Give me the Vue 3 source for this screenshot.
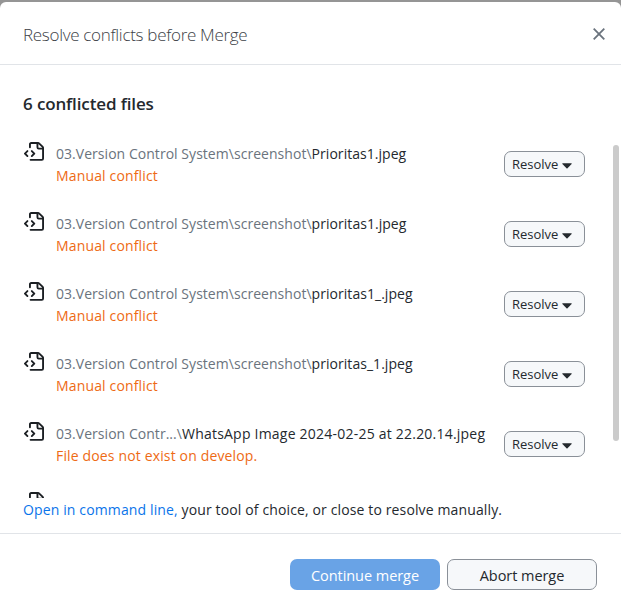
<script setup>
const dir = '03.Version Control System\\screenshot\\'
const files = [
  { dir, name: 'Prioritas1.jpeg', status: 'Manual conflict' },
  { dir, name: 'prioritas1.jpeg', status: 'Manual conflict' },
  { dir, name: 'prioritas1_.jpeg', status: 'Manual conflict' },
  { dir, name: 'prioritas_1.jpeg', status: 'Manual conflict' },
  { dir: '03.Version Contr...\\', name: 'WhatsApp Image 2024-02-25 at 22.20.14.jpeg', status: 'File does not exist on develop.', wide: true },
  { dir: '', name: '', status: '' },
]
</script>

<template>
  <div class="backdrop">
    <section class="dialog">
      <header>
        <h1>Resolve conflicts before Merge</h1>
        <button class="close" aria-label="Close">
          <svg width="12" height="12" viewBox="0 0 12 12"><path d="M.7.7l10.6 10.6M11.3.7L.7 11.3" /></svg>
        </button>
      </header>
      <main>
        <h2>6 conflicted files</h2>
        <div class="scroller">
          <ul>
            <li v-for="(f, i) in files" :key="i">
              <svg class="file" width="20" height="20" viewBox="0 0 16 16">
                <path d="M4 1.75C4 .784 4.784 0 5.75 0h5.586c.464 0 .909.184 1.237.513l2.914 2.914c.329.328.513.773.513 1.237v8.586A1.75 1.75 0 0 1 14.25 15h-9a.75.75 0 0 1 0-1.5h9a.25.25 0 0 0 .25-.25V6h-2.75A1.75 1.75 0 0 1 10 4.25V1.5H5.75a.25.25 0 0 0-.25.25v2.5a.75.75 0 0 1-1.5 0Zm1.72 4.97a.75.75 0 0 1 1.06 0l2 2a.75.75 0 0 1 0 1.06l-2 2a.749.749 0 0 1-1.275-.326.749.749 0 0 1 .215-.734l1.47-1.47-1.47-1.47a.75.75 0 0 1 0-1.06ZM3.28 7.78 1.81 9.25l1.47 1.47a.751.751 0 0 1-.018 1.042.751.751 0 0 1-1.042.018l-2-2a.75.75 0 0 1 0-1.06l2-2a.751.751 0 0 1 1.042.018.751.751 0 0 1 .018 1.042Zm8.22-6.218V4.25c0 .138.112.25.25.25h2.688l-.011-.013-2.914-2.914-.013-.011Z" />
              </svg>
              <template v-if="f.name">
                <div class="info">
                  <div class="path"><span class="dir">{{ f.dir }}</span><span :class="{ wide: f.wide }">{{ f.name }}</span></div>
                  <div class="status">{{ f.status }}</div>
                </div>
                <button class="resolve">
                  <span>Resolve</span>
                  <svg width="10" height="6" viewBox="0 0 10 6"><path d="M.6.3h8.8q.6.2.2.7L5.5 5.3q-.5.4-1 0L.4 1Q0 .5.6.3z" /></svg>
                </button>
              </template>
            </li>
          </ul>
          <div class="track"><div class="thumb"></div></div>
        </div>
        <p><a>Open in command line,</a> your tool of choice, or close to resolve manually.</p>
      </main>
      <footer>
        <button class="primary"><span>Continue merge</span></button>
        <button class="secondary"><span>Abort merge</span></button>
      </footer>
    </section>
  </div>
</template>

<style>
body { margin: 0; overflow: hidden; }
</style>

<style scoped>
* { box-sizing: border-box; }
.backdrop {
  height: 609px;
  padding-top: 2px;
  background: #959595;
  font-family: "Open Sans", "Noto Sans", sans-serif;
  font-size: 14px;
  font-weight: 370;
  color: #24292e;
}
.dialog {
  height: 607px;
  background: #fff;
  border-radius: 6px 6px 0 0;
  display: flex;
  flex-direction: column;
}
header {
  height: 63px;
  border-bottom: 1px solid #e1e4e8;
  display: flex;
  align-items: center;
  justify-content: space-between;
  padding: 2px 16px 0 23px;
}
h1 { margin: 0; padding-top: 1px; font-size: 17px; font-weight: 300; line-height: 24px; letter-spacing: -0.3px; color: #3c4146; white-space: nowrap; }
button { font-family: inherit; font-weight: inherit; margin: 0; padding: 0; }
.close { border: 0; background: none; width: 12px; height: 12px; display: flex; }
.close path { stroke: #6a737d; stroke-width: 1.8; fill: none; }
main { height: 469px; border-bottom: 1px solid #e1e4e8; padding: 28px 0 0 23px; }
h2 { margin: 0; font-size: 17px; font-weight: 600; line-height: 22px; letter-spacing: -0.13px; }
.scroller { margin-top: 20px; height: 363px; display: flex; overflow: hidden; }
ul { margin: 0; padding: 0; list-style: none; width: 562px; }
li { height: 70px; display: flex; align-items: flex-start; padding-top: 7px; }
.file { margin: 0 0 0 1px; flex: none; fill: #1b1f23; }
.info { flex: 1; padding: 1px 0 0 12px; white-space: nowrap; line-height: 22px; letter-spacing: 0.04px; }
.dir { color: #6a737d; }
.wide { letter-spacing: 0.22px; }
.status { color: #ee6a14; letter-spacing: 0.15px; }
.resolve {
  flex: none;
  width: 81px;
  height: 26px;
  margin-top: 9px;
  border: 1px solid #8a9098;
  border-radius: 7px;
  background: #f6f8fa;
  color: #24292e;
  display: flex;
  align-items: center;
  gap: 4px;
  padding-left: 7px;
  font-size: 13px;
}
.resolve svg { margin-top: 3px; fill: #24292e; }
.track { width: 6px; margin-left: 28px; padding-top: 10px; }
.thumb { height: 296px; border-radius: 3px; background: #cbcbcb; }
p { margin: 0; padding-top: 1px; line-height: 22px; white-space: nowrap; letter-spacing: 0.13px; }
a { color: #0a74ea; }
footer { display: flex; justify-content: flex-end; gap: 7px; padding: 25px 24px 0 0; }
footer button { width: 150px; height: 31px; padding-top: 1px; border-radius: 7px; font-size: 14.5px; letter-spacing: -0.05px; }
.primary { border: 0; background: #69a3e6; color: #fff; }
.secondary { border: 1px solid #8a9098; background: #f6f8fa; color: #24292e; }
</style>
